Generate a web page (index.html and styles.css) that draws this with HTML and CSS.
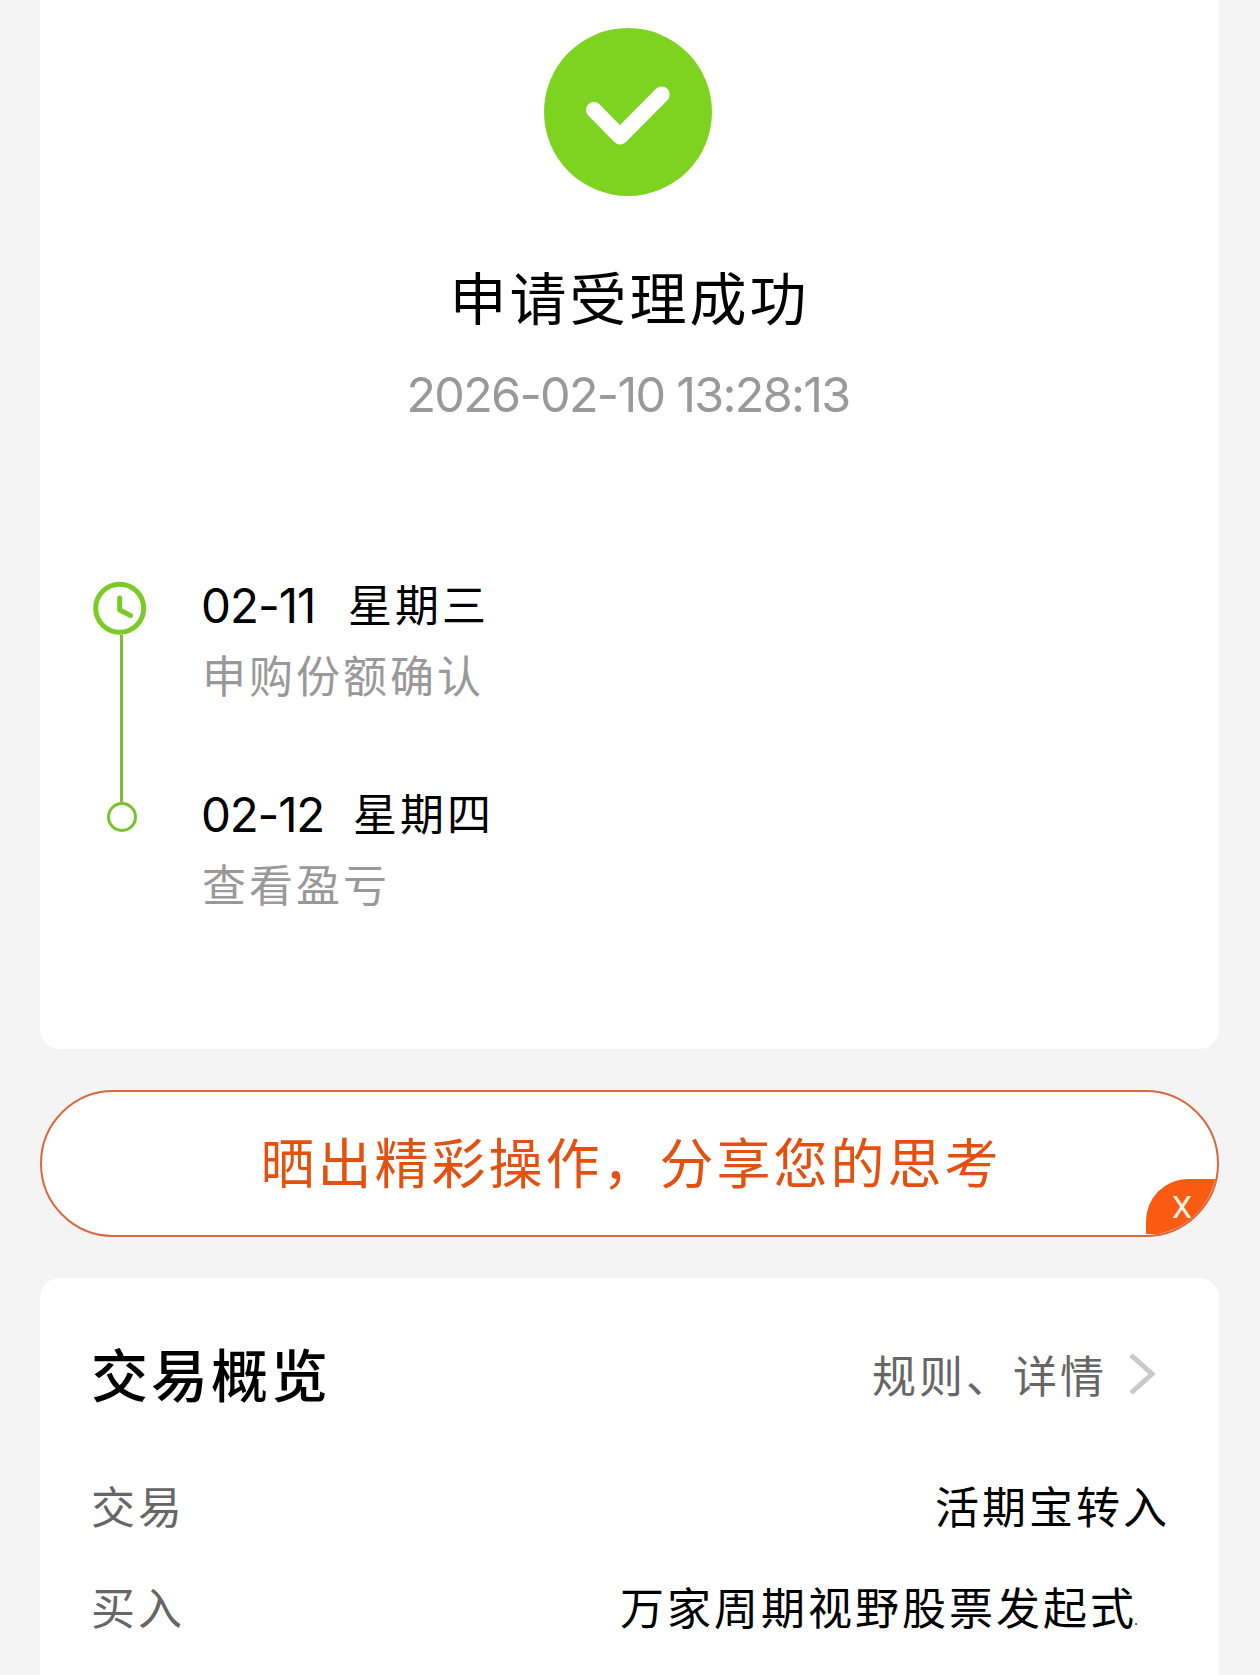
FILE: index.html
```html
<!DOCTYPE html>
<html lang="zh-CN">
<head>
  <meta charset="UTF-8">
  <title>申请受理成功</title>
  <link rel="stylesheet" href="styles.css">
</head>

<body>
  <div class="card result">
    <svg class="success-icon" viewBox="0 0 168 168">
      <circle cx="84" cy="84" r="84" fill="#7ed321"/>
      <path d="M50 82 L76 108.5 L117.7 66.5" fill="none" stroke="#fff" stroke-width="16" stroke-linecap="round" stroke-linejoin="round"/>
    </svg>
    <h1>申请受理成功</h1>
    <p class="time">2026-02-10 13:28:13</p>

    <div class="timeline">
      <svg class="track" viewBox="0 0 60 260">
        <path d="M29.5 55 V222" stroke="#77bf33" stroke-width="3"/>
        <circle cx="27.7" cy="28.3" r="24" fill="none" stroke="#79cb25" stroke-width="5"/>
        <path d="M27.7 18 V30 L38.5 35.5" fill="none" stroke="#79cb25" stroke-width="5" stroke-linecap="round" stroke-linejoin="round"/>
        <circle cx="30" cy="237" r="13.5" fill="none" stroke="#77c22e" stroke-width="3"/>
      </svg>
      <ul class="steps">
        <li>
          <p class="day"><span class="date">02-11</span><span>星期三</span></p>
          <p class="note">申购份额确认</p>
        </li>
        <li>
          <p class="day"><span class="date">02-12</span><span>星期四</span></p>
          <p class="note">查看盈亏</p>
        </li>
      </ul>
    </div>
  </div>

  <div class="share">
    <span class="share-text">晒出精彩操作，分享您的思考</span>
    <span class="close">X</span>
  </div>

  <div class="card overview">
    <div class="overview-head">
      <h2>交易概览</h2>
      <a class="more">规则、详情
        <svg class="arrow" viewBox="0 0 28 44"><path d="M3 3 L24 22 L3 41" fill="none" stroke="#c9c9c9" stroke-width="5"/></svg>
      </a>
    </div>
    <div class="row">
      <span class="label">交易</span>
      <span class="value">活期宝转入</span>
    </div>
    <div class="row">
      <span class="label">买入</span>
      <span class="value fund">万家周期视野股票发起式<span class="dot">.</span></span>
    </div>
  </div>
</body>
</html>
```
FILE: styles.css
```css
* { box-sizing: border-box; margin: 0; padding: 0; }

body {
  height: 1675px;
  overflow: hidden;
  padding: 0 41px 0 40px;
  background: #f4f4f4;
  color: #000;
  font-family: Inter, "Noto Sans CJK SC", sans-serif;
  font-size: 44px;
  line-height: 60px;
  letter-spacing: 3px;
}

.card { background: #fff; }

/* result */
.result {
  height: 1049px;
  padding: 28px 3px 0 0;
  border-radius: 0 0 20px 20px;
  text-align: center;
}
.success-icon { display: block; width: 168px; height: 168px; margin: 0 auto; }
.result h1 { margin-top: 64px; padding-left: 3px; font-size: 57px; font-weight: 400; line-height: 80px; }
.time { margin-top: 25px; color: #999; font-size: 48.5px; letter-spacing: -1.7px; }

/* timeline */
.timeline { display: flex; margin-top: 155px; padding-left: 52px; text-align: left; }
.track { width: 60px; height: 260px; }
.steps { margin-left: 50px; list-style: none; }
.steps li { height: 209px; margin-top: -4px; }
.steps li + li { margin-top: 0; }
.day { display: flex; gap: 29px; }
.date { min-width: 118px; margin-left: -1px; font-size: 47.5px; font-kerning: none; letter-spacing: -1px; }
.steps li + li .date { letter-spacing: -1.2px; }
.note { margin-top: 11px; color: #999; }

/* share button */
.share {
  position: relative;
  display: flex;
  align-items: center;
  justify-content: center;
  height: 147px;
  margin: 41px 0;
  overflow: hidden;
  background: #fff;
  border: 2px solid #d8693c;
  border-radius: 74px;
  color: #e5500f;
  font-size: 54px;
}
.share-text { padding: 3px 0 0 3px; }
.close {
  position: absolute;
  right: 0;
  bottom: 1px;
  width: 71px;
  height: 55px;
  padding-left: 26px;
  background: #fb5a13;
  border-top-left-radius: 42px;
  color: #fff3e2;
  font-family: Roboto, sans-serif;
  font-size: 32px;
  font-weight: 400;
  line-height: 57px;
  letter-spacing: 0;
}

/* overview */
.overview { height: 397px; padding: 59px 49px 0 51px; border-radius: 20px 20px 0 0; }
.overview-head { display: flex; align-items: center; justify-content: space-between; height: 80px; }
.overview-head h2 { font-size: 57px; font-weight: 500; letter-spacing: 3px; }
.more { display: flex; align-items: center; margin-right: 14px; color: #666; }
.arrow { width: 28px; height: 44px; margin: -6px 0 0 21px; }
.row { display: flex; justify-content: space-between; margin-top: 41px; }
.overview-head + .row { margin-top: 61px; }
.label { color: #666; }
.fund { width: 550px; white-space: nowrap; }
.dot { margin-left: -3px; font-size: 14px; }
```
